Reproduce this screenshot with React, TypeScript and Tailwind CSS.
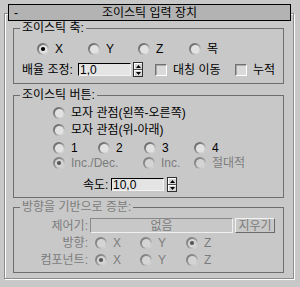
import { useId } from "react";

function Radio({ checked = false, disabled = false }: { checked?: boolean; disabled?: boolean }) {
  const id = "g" + useId().replace(/[^a-zA-Z0-9]/g, "");
  return (
    <svg width="12" height="12" viewBox="0 0 12 12" className="shrink-0">
      <defs>
        <linearGradient id={id} x1="0" y1="0" x2="1" y2="1">
          <stop offset="0" stopColor={disabled ? "#6e6e6e" : "#505050"} />
          <stop offset="0.55" stopColor="#9c9c9c" />
          <stop offset="1" stopColor="#f6f6f6" />
        </linearGradient>
      </defs>
      <circle cx="6" cy="6" r="6" fill={`url(#${id})`} />
      <circle cx="6.3" cy="6.3" r="4.4" fill={disabled ? "#d4d4d4" : "#e2e2e2"} />
      {checked && <circle cx="6" cy="6" r="2.1" fill={disabled ? "#555555" : "#000000"} />}
    </svg>
  );
}

function RadioItem({
  label,
  checked,
  disabled,
  className = "",
}: {
  label: string;
  checked?: boolean;
  disabled?: boolean;
  className?: string;
}) {
  return (
    <div className={`flex items-center gap-[6px] shrink-0 ${className}`}>
      <Radio checked={checked} disabled={disabled} />
      <span className={disabled ? "text-[#7c7c7c]" : ""}>{label}</span>
    </div>
  );
}

function Checkbox({ label, className = "" }: { label: string; className?: string }) {
  return (
    <div className={`flex items-center gap-[6px] shrink-0 ${className}`}>
      <span className="w-[12px] h-[12px] border border-t-[#707070] border-l-[#707070] border-b-white border-r-white bg-[#dadada] shadow-[inset_1px_1px_0_#a8a8a8]" />
      <span>{label}</span>
    </div>
  );
}

function Spinner({ className = "" }: { className?: string }) {
  return (
    <div className={`flex flex-col w-[10px] h-[15px] border border-[#303030] bg-[#d6d6d6] shrink-0 ${className}`}>
      <div className="flex-1 flex items-center justify-center border-b border-[#505050] shadow-[inset_1px_1px_0_#fff]">
        <svg width="5" height="3" viewBox="0 0 5 3">
          <path d="M2.5 0 L5 3 L0 3 Z" fill="#000" />
        </svg>
      </div>
      <div className="flex-1 flex items-center justify-center shadow-[inset_1px_1px_0_#fff]">
        <svg width="5" height="3" viewBox="0 0 5 3">
          <path d="M0 0 L5 0 L2.5 3 Z" fill="#000" />
        </svg>
      </div>
    </div>
  );
}

function Field({ value, className = "" }: { value: string; className?: string }) {
  return (
    <div
      className={`w-[53px] h-[13px] bg-[#e4e4e4] border border-t-black border-l-black border-r-[#f4f4f4] border-b-[#f4f4f4] flex items-center pl-[1px] leading-none shrink-0 ${className}`}
    >
      {value}
    </div>
  );
}

function Group({
  label,
  disabled,
  className = "",
  children,
}: {
  label: string;
  disabled?: boolean;
  className?: string;
  children: React.ReactNode;
}) {
  return (
    <div className={`relative w-[271px] border border-[#6e6e6e] ${className}`}>
      <span
        className={`absolute top-[-8px] left-[6px] px-[2px] bg-[#c8c8c8] leading-[14px] ${
          disabled ? "text-[#7c7c7c]" : ""
        }`}
      >
        {label}
      </span>
      {children}
    </div>
  );
}

export default function App() {
  return (
    <div className="w-[300px] h-[287px] bg-[#c8c8c8] overflow-hidden text-[12px] leading-[14px] text-black font-['Liberation_Sans','Noto_Sans_CJK_KR',sans-serif]">
      <div className="relative z-10 mt-[4px] ml-[8px] w-[283px] h-[17px] border border-black bg-[#b3b3b3] flex items-center">
        <span className="w-[20px] pl-[5px]">-</span>
        <span className="flex-1 text-center">조이스틱 입력 장치</span>
        <span className="w-[20px]" />
      </div>

      <div className="-mt-[8px] ml-[4px] w-[290px] h-[266px] border border-[#8c8c8c] shadow-[1px_1px_0_#fff,inset_1px_1px_0_#fff] pt-[14px] pl-[8px]">
        <Group label="조이스틱 축:" className="h-[56px]">
          <div className="mt-[13px] ml-[23px] h-[14px] flex items-center">
            <RadioItem label="X" checked className="w-[51px]" />
            <RadioItem label="Y" className="w-[50px]" />
            <RadioItem label="Z" className="w-[51px]" />
            <RadioItem label="목" />
          </div>
          <div className="mt-[6px] ml-[8px] h-[15px] flex items-center">
            <span className="w-[56px] shrink-0">배율 조정:</span>
            <Field value="1,0" />
            <Spinner className="ml-[2px]" />
            <Checkbox label="대칭 이동" className="ml-[12px] w-[80px]" />
            <Checkbox label="누적" />
          </div>
        </Group>

        <Group label="조이스틱 버튼:" className="mt-[11px] h-[103px]">
          <div className="mt-[10px] ml-[39px] h-[14px] flex items-center">
            <RadioItem label="모자 관점(왼쪽-오른쪽)" className="gap-[5px]" />
          </div>
          <div className="mt-[3px] ml-[39px] h-[14px] flex items-center">
            <RadioItem label="모자 관점(위-아래)" className="gap-[5px]" />
          </div>
          <div className="mt-[4px] ml-[39px] h-[14px] flex items-center">
            <RadioItem label="1" className="w-[45px] gap-[5px]" />
            <RadioItem label="2" className="w-[46px] gap-[5px]" />
            <RadioItem label="3" className="w-[50px] gap-[5px]" />
            <RadioItem label="4" className="gap-[5px]" />
          </div>
          <div className="mt-[1px] ml-[39px] h-[14px] flex items-center">
            <RadioItem label="Inc./Dec." checked disabled className="w-[90px] gap-[5px]" />
            <RadioItem label="Inc." disabled className="w-[51px] gap-[4px]" />
            <RadioItem label="절대적" disabled className="gap-[5px]" />
          </div>
          <div className="mt-[7px] ml-[69px] h-[15px] flex items-center">
            <span className="w-[28px] shrink-0">속도:</span>
            <Field value="10,0" />
            <Spinner className="ml-[3px]" />
          </div>
        </Group>

        <Group label="방향을 기반으로 증분:" disabled className="mt-[9px] h-[66px]">
          <div className="mt-[10px] h-[15px] flex items-center text-[#7c7c7c]">
            <span className="w-[74px] text-right shrink-0">제어기:</span>
            <div className="ml-[2px] w-[143px] h-[15px] border border-t-[#8a8a8a] border-l-[#8a8a8a] border-r-[#f0f0f0] border-b-[#f0f0f0] flex items-center justify-center">
              없음
            </div>
            <div className="ml-[2px] w-[40px] h-[15px] border border-t-[#f2f2f2] border-l-[#f2f2f2] border-r-[#6a6a6a] border-b-[#6a6a6a] flex items-center justify-center">
              지우기
            </div>
          </div>
          <div className="mt-[3px] h-[14px] flex items-center">
            <span className="w-[74px] text-right shrink-0 text-[#7c7c7c]">방향:</span>
            <RadioItem label="X" disabled className="ml-[7px] w-[45px]" />
            <RadioItem label="Y" disabled className="w-[46px]" />
            <RadioItem label="Z" checked disabled />
          </div>
          <div className="mt-[3px] h-[14px] flex items-center">
            <span className="w-[74px] text-right shrink-0 text-[#7c7c7c]">컴포넌트:</span>
            <RadioItem label="X" checked disabled className="ml-[7px] w-[45px]" />
            <RadioItem label="Y" disabled className="w-[46px]" />
            <RadioItem label="Z" disabled />
          </div>
        </Group>
      </div>
    </div>
  );
}
